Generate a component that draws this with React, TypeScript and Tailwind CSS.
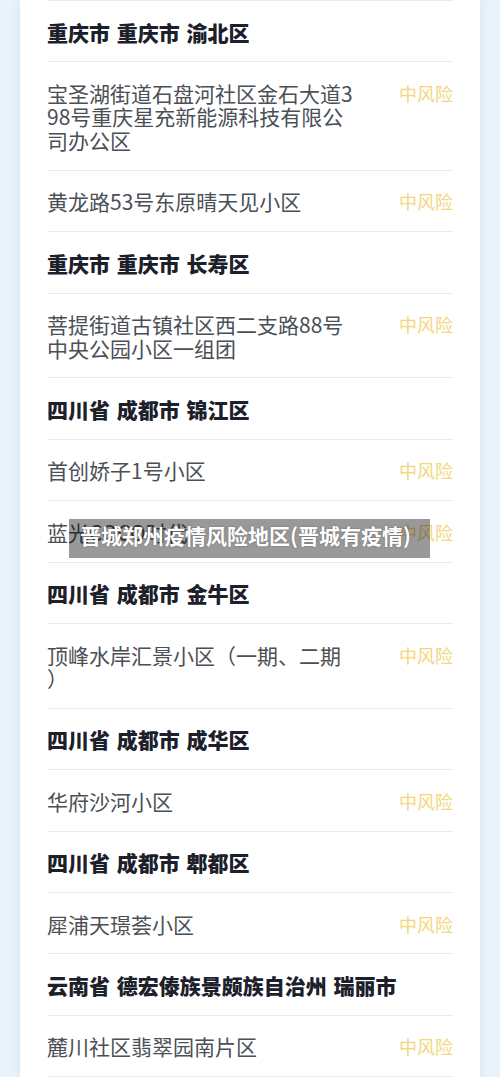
/**
 * 中风险地区列表 — 按省/市/区分组，每条地址右侧标注风险等级。
 * 底部叠一条半透明标题横幅（文章配图样式）。
 */

interface Section {
  region: string;
  places: string[][];
}

// 每个地址按截图中的换行拆成多行，避免不同字体宽度导致折行位置变化
const SECTIONS: Section[] = [
  {
    region: "重庆市 重庆市 渝北区",
    places: [
      ["宝圣湖街道石盘河社区金石大道3", "98号重庆星充新能源科技有限公", "司办公区"],
      ["黄龙路53号东原晴天见小区"],
    ],
  },
  {
    region: "重庆市 重庆市 长寿区",
    places: [["菩提街道古镇社区西二支路88号", "中央公园小区一组团"]],
  },
  {
    region: "四川省 成都市 锦江区",
    places: [["首创娇子1号小区"], ["蓝光COCO时代"]],
  },
  {
    region: "四川省 成都市 金牛区",
    places: [["顶峰水岸汇景小区（一期、二期", "）"]],
  },
  {
    region: "四川省 成都市 成华区",
    places: [["华府沙河小区"]],
  },
  {
    region: "四川省 成都市 郫都区",
    places: [["犀浦天璟荟小区"]],
  },
  {
    region: "云南省 德宏傣族景颇族自治州 瑞丽市",
    places: [["麓川社区翡翠园南片区"]],
  },
];

const FONT = "font-['PingFang_SC','Noto_Sans_CJK_SC',sans-serif]";

export default function App() {
  return (
    <div className={`relative min-h-screen bg-[#e8f3fc] ${FONT}`}>
      <div className="mx-[20px] min-h-screen bg-white px-[27px] shadow-[0_0_10px_rgba(110,160,210,0.18)]">
        <ul>
          {SECTIONS.map((section) => (
            <li key={section.region}>
              {/* ── Region header ── */}
              <div className="border-t border-[#e9eaec] pt-[19.5px] pb-[17.4px] text-[21px] font-black leading-[23.5px] whitespace-nowrap text-[#1b202b] [word-spacing:2px]">
                {section.region}
              </div>

              {/* ── Places ── */}
              {section.places.map((lines) => (
                <div
                  key={lines.join("")}
                  className="flex items-start justify-between border-t border-[#e9eaec] pt-[19.5px] pb-[17.4px]"
                >
                  <div className="text-[21px] leading-[23.5px] text-[#4b4f56]">
                    {lines.map((line) => (
                      <span key={line} className="block whitespace-nowrap">
                        {line}
                      </span>
                    ))}
                  </div>
                  <span className="shrink-0 text-[18px] leading-[23.5px] text-[#f3d67c]">
                    中风险
                  </span>
                </div>
              ))}
            </li>
          ))}
        </ul>
        <div className="border-t border-[#e9eaec]" />
      </div>

      {/* 标题横幅（叠在列表上） */}
      <div className="absolute left-[69px] top-[519px] h-[39px] w-[361px] bg-black/40 pl-[11px] text-[21px] font-bold leading-[32px] whitespace-nowrap text-white [text-shadow:0_0_2px_rgba(0,0,0,0.35)]">
        晋城郑州疫情风险地区(晋城有疫情)
      </div>
    </div>
  );
}
